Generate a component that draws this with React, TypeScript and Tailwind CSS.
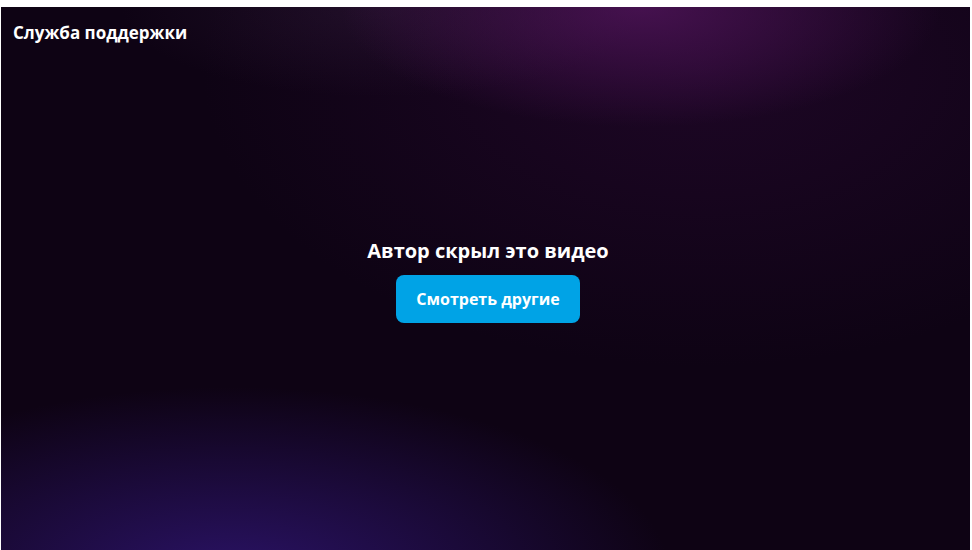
const App = () => {
  return (
    <div className="w-[972px] h-[550px] bg-white pt-[7px] pl-[1px] pr-[2px] overflow-hidden font-['Open_Sans','Noto_Sans',sans-serif]">
      <div className="relative w-full h-full flex flex-col bg-[#0e0314] bg-[radial-gradient(ellipse_300px_120px_at_640px_0px,rgba(80,20,90,0.8),transparent),radial-gradient(ellipse_260px_90px_at_380px_0px,rgba(60,35,70,0.35),transparent),radial-gradient(ellipse_440px_190px_at_230px_570px,rgba(45,20,110,0.9),transparent),radial-gradient(ellipse_500px_300px_at_700px_60px,rgba(45,10,55,0.5),transparent)]">
        <div className="px-3 pt-[14px] text-white text-[17px] font-bold leading-6">
          Служба поддержки
        </div>
        <div className="flex-1 flex flex-col items-center justify-center pl-[5px] pb-[36px]">
          <p className="text-white text-[20px] font-bold leading-7">Автор скрыл это видео</p>
          <button className="mt-[10px] w-[184px] h-[48px] rounded-lg bg-[#00a3e6] text-white text-[16px] font-bold">
            Смотреть другие
          </button>
        </div>
      </div>
    </div>
  );
};

export default App;
